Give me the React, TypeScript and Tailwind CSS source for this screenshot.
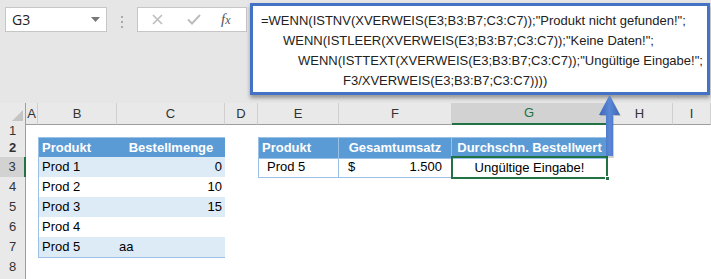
import React from "react";

const cols =
  "grid grid-cols-[26px_12px_79px_108px_33px_81px_113px_155px_66px_1fr]";

const font = "font-['Liberation_Sans',Arial,sans-serif]";

function ColHead({ label, active }: { label: string; active?: boolean }) {
  return (
    <div
      className={
        "flex items-center justify-center border-r border-[#d0d0d0] text-[13px] " +
        (active
          ? "bg-[#d2d2d2] text-[#217346] border-b-2 border-b-[#217346]"
          : "bg-[#e9e9e9] text-[#333] border-b border-b-[#9e9e9e]")
      }
    >
      {label}
    </div>
  );
}

function RowHead({ n, active }: { n?: number; active?: boolean }) {
  return (
    <div
      className={
        "flex items-center justify-center border-b border-[#d4d4d4] text-[13px] " +
        (active
          ? "bg-[#d2d2d2] border-r-2 border-r-[#217346] text-[#333]"
          : "bg-[#e9e9e9] border-r border-r-[#9e9e9e] text-[#333]")
      }
    >
      {n}
    </div>
  );
}

function Empty() {
  return <div />;
}

export default function App() {
  const data = [
    { n: 3, p: "Prod 1", q: "0", band: true },
    { n: 4, p: "Prod 2", q: "10", band: false },
    { n: 5, p: "Prod 3", q: "15", band: true },
    { n: 6, p: "Prod 4", q: "", band: false },
    { n: 7, p: "Prod 5", q: "aa", band: true },
  ];

  return (
    <div className={"relative w-[711px] h-[279px] overflow-hidden bg-white " + font}>
      {/* formula bar */}
      <div className="flex h-[103px] bg-[#e6e6e6] pt-[3px]">
        <div className="mt-[4px] ml-[5px] flex h-[25px] w-[102px] items-center justify-between border border-[#c6c6c6] bg-white pl-[6px] pr-[6px] text-[15px] text-[#222]">
          <span className="font-['Open_Sans',sans-serif] text-[14px]">G3</span>
          <svg width="9" height="5" viewBox="0 0 9 5">
            <path d="M0 0 L9 0 L4.5 5 Z" fill="#777" />
          </svg>
        </div>
        <div className="mt-[10px] flex w-[30px] flex-col items-center gap-[3px] pt-[3px]">
          <span className="h-[2px] w-[2px] bg-[#aaa]" />
          <span className="h-[2px] w-[2px] bg-[#aaa]" />
          <span className="h-[2px] w-[2px] bg-[#aaa]" />
        </div>
        <div className="mt-[4px] flex h-[25px] w-[110px] items-center border border-[#c6c6c6] bg-white">
          <svg className="ml-[14px]" width="11" height="11" viewBox="0 0 11 11">
            <path d="M1 1 L10 10 M10 1 L1 10" stroke="#bdbdbd" strokeWidth="1.6" />
          </svg>
          <svg className="ml-[24px]" width="14" height="11" viewBox="0 0 14 11">
            <path d="M1 5.5 L5 9.5 L13 1" stroke="#bdbdbd" strokeWidth="2" fill="none" />
          </svg>
          <span className="ml-[20px] font-['Liberation_Serif',serif] text-[15px] italic text-[#555]">
            f<span className="text-[12px]">x</span>
          </span>
        </div>
        <div className="ml-[3px] h-[92px] w-[460px] border-[3px] border-[#4472c4] bg-white pt-[5px] pl-[8px] text-[13px] leading-[20px] text-[#222] shadow-[0_3px_4px_rgba(0,0,0,0.35)]">
          <div>=WENN(ISTNV(XVERWEIS(E3;B3:B7;C3:C7));"Produkt nicht gefunden!";</div>
          <div className="pl-[22px]">WENN(ISTLEER(XVERWEIS(E3;B3:B7;C3:C7));"Keine Daten!";</div>
          <div className="pl-[37px]">WENN(ISTTEXT(XVERWEIS(E3;B3:B7;C3:C7));"Ungültige Eingabe!";</div>
          <div className="pl-[82px]">F3/XVERWEIS(E3;B3:B7;C3:C7))))</div>
        </div>
      </div>

      {/* column headers */}
      <div className={cols + " h-[18px]"}>
        <div className="flex items-end justify-end border-r border-b border-[#9e9e9e] bg-[#e9e9e9] p-[2px]">
          <svg width="12" height="12" viewBox="0 0 12 12">
            <path d="M12 0 L12 12 L0 12 Z" fill="#c4c4c4" />
          </svg>
        </div>
        <ColHead label="A" />
        <ColHead label="B" />
        <ColHead label="C" />
        <ColHead label="D" />
        <ColHead label="E" />
        <ColHead label="F" />
        <ColHead label="G" active />
        <ColHead label="H" />
        <ColHead label="I" />
      </div>

      {/* row 1 */}
      <div className={cols + " h-[16px]"}>
        <RowHead n={1} />
      </div>

      {/* row 2: table headers */}
      <div className={cols + " h-[20px] text-[13px] font-bold text-white"}>
        <RowHead n={2} />
        <Empty />
        <div className="flex items-center border-l border-y border-[#9bc2e6] bg-[#5b9bd5] pl-[3px]">Produkt</div>
        <div className="flex items-center justify-center border-y border-[#9bc2e6] bg-[#5b9bd5]">Bestellmenge</div>
        <Empty />
        <div className="flex items-center border-l border-r border-y border-[#9bc2e6] bg-[#5b9bd5] pl-[3px]">Produkt</div>
        <div className="flex items-center justify-center border-r border-y border-[#9bc2e6] bg-[#5b9bd5]">Gesamtumsatz</div>
        <div className="flex items-center justify-center border-y border-[#9bc2e6] bg-[#5b9bd5]">Durchschn. Bestellwert</div>
      </div>

      {/* rows 3-7 */}
      {data.map((r) => (
        <div key={r.n} className={cols + " h-[20px] text-[13px] text-black"}>
          <RowHead n={r.n} active={r.n === 3} />
          <Empty />
          <div
            className={
              "flex items-center border-l border-b border-[#9bc2e6] pl-[3px] " +
              (r.band ? "bg-[#ddebf7]" : "bg-white")
            }
          >
            {r.p}
          </div>
          <div
            className={
              "flex items-center border-b border-[#9bc2e6] " +
              (r.q === "aa" ? "justify-start pl-[2px] " : "justify-end pr-[3px] ") +
              (r.band ? "bg-[#ddebf7]" : "bg-white")
            }
          >
            {r.q}
          </div>
          {r.n === 3 ? (
            <>
              <Empty />
              <div className="flex items-center border-l border-r border-b border-[#9bc2e6] pl-[8px]">Prod 5</div>
              <div className="flex items-center justify-between border-r border-b border-[#9bc2e6] pl-[9px] pr-[9px]">
                <span>$</span>
                <span>1.500</span>
              </div>
              <div className="relative flex items-center justify-center">
                Ungültige Eingabe!
                <div className="pointer-events-none absolute -top-[1px] -left-[1px] -right-[1px] -bottom-[1px] border-2 border-[#217346]" />
                <div className="absolute -right-[3px] -bottom-[3px] h-[5px] w-[5px] border border-white bg-[#217346]" />
              </div>
            </>
          ) : null}
        </div>
      ))}

      {/* row 8 */}
      <div className={cols + " h-[20px]"}>
        <RowHead n={8} />
      </div>
      <div className={cols + " h-[20px]"}>
        <RowHead />
      </div>

      {/* arrow */}
      <svg className="absolute left-[596px] top-[93px]" width="28" height="66" viewBox="0 0 28 66">
        <defs>
          <linearGradient id="sh" x1="0" x2="1" y1="0" y2="0">
            <stop offset="0" stopColor="#3d66b5" />
            <stop offset="0.5" stopColor="#5a88d6" />
            <stop offset="1" stopColor="#3d66b5" />
          </linearGradient>
        </defs>
        <path d="M13.5 2 L24 22 L17 22 L17 64 L10 64 L10 22 L3 22 Z" fill="rgba(0,0,0,0.18)" transform="translate(1,1)" />
        <path d="M13.5 2 L24 22 L17 22 L17 63 L10 63 L10 22 L3 22 Z" fill="url(#sh)" />
      </svg>
    </div>
  );
}
